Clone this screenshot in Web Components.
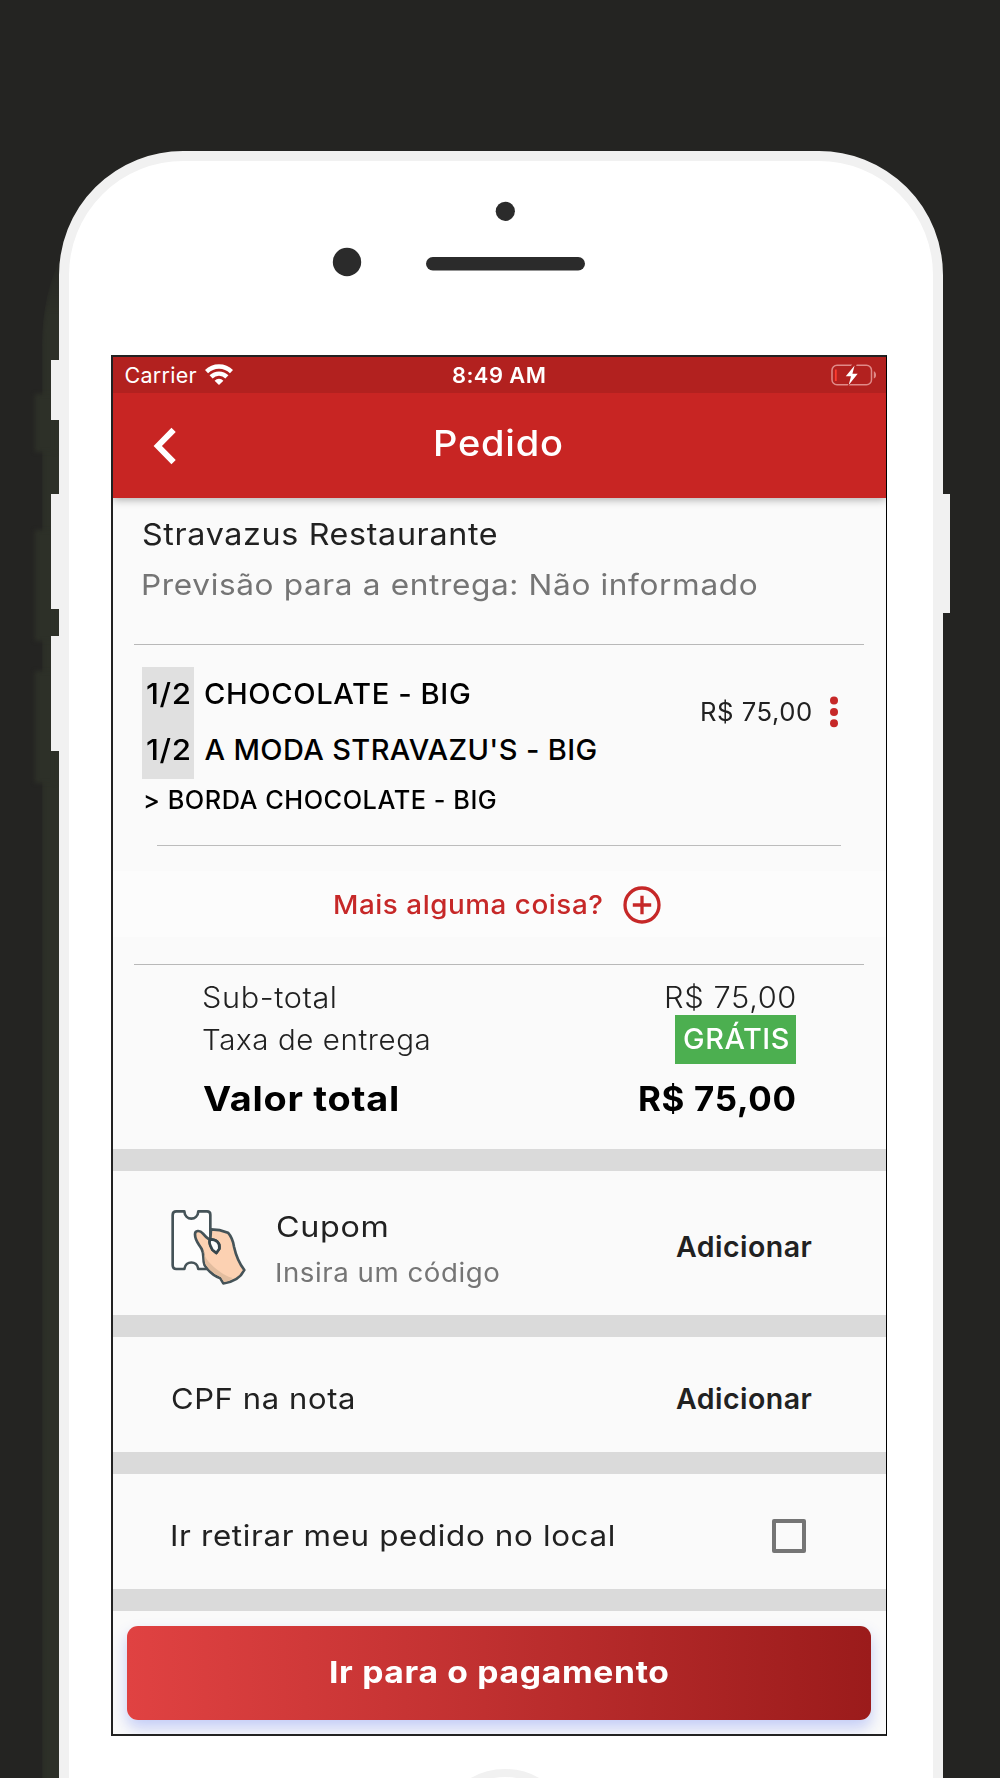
<!DOCTYPE html>
<html lang="pt-BR">
<head>
<meta charset="utf-8">
<title>Pedido</title>
<style>
  body {
    margin: 0;
    height: 1778px;
    overflow: hidden;
    background: #242422;
    font-family: Inter, "Open Sans", sans-serif;
    color: #212121;
  }
</style>
</head>
<body>
<phone-frame>
  <status-bar></status-bar>
  <app-header><fit-text size="36" weight="500" width="127">Pedido</fit-text></app-header>
  <restaurant-info>
    <fit-text size="30" width="354">Stravazus Restaurante</fit-text>
    <fit-text slot="eta" size="29" width="613">Previsão para a entrega: Não informado</fit-text>
  </restaurant-info>
  <order-item></order-item>
  <add-more></add-more>
  <order-totals></order-totals>
  <option-row style="--height: 144px; --shift: 13px">
    <coupon-icon slot="icon"></coupon-icon>
    <fit-text size="29" width="110" line="46">Cupom</fit-text>
    <fit-text size="26" width="222" line="46" style="color: #757575">Insira um código</fit-text>
    <fit-text slot="action" size="28.5" weight="600" width="135.5" style="margin-top: -6px">Adicionar</fit-text>
  </option-row>
  <option-row style="--height: 115px; --shift: 8px">
    <fit-text size="29" width="182">CPF na nota</fit-text>
    <fit-text slot="action" size="28.5" weight="600" width="135.5">Adicionar</fit-text>
  </option-row>
  <option-row style="--height: 115px; --shift: 8px">
    <fit-text size="29" width="441">Ir retirar meu pedido no local</fit-text>
    <check-box slot="action"></check-box>
  </option-row>
  <pay-button><fit-text size="30.5" weight="700" width="337">Ir para o pagamento</fit-text></pay-button>
</phone-frame>

<script>
function define(name, html) {
  const template = document.createElement("template");
  template.innerHTML = html;

  customElements.define(name, class extends HTMLElement {
    constructor() {
      super();
      this.attachShadow({ mode: "open" }).appendChild(template.content.cloneNode(true));
    }
  });
}

// One line of text whose ink fills the given width: tracked a little first,
// then the glyphs are widened for what remains
class FitText extends HTMLElement {
  constructor() {
    super();
    this.attachShadow({ mode: "open" });
    this.shadowRoot.innerHTML = `
      <style>
        :host { display: block; flex: none; white-space: pre; text-align: left; }
        span { display: inline-block; transform-origin: 0 0; }
      </style>
      <span><slot></slot></span>
    `.replace(/>\s+</g, "><").trim();
  }

  connectedCallback() {
    const size = Number(this.getAttribute("size"));
    const weight = this.getAttribute("weight") || "400";
    const width = Number(this.getAttribute("width"));
    const line = this.getAttribute("line") || "44";
    const text = this.textContent;
    const span = this.shadowRoot.querySelector("span");

    this.style.width = `${width}px`;
    this.style.font = `${weight} ${size}px/${line}px Inter, "Open Sans", sans-serif`;

    const ctx = document.createElement("canvas").getContext("2d");
    ctx.font = `${weight} ${size}px Inter, "Open Sans", sans-serif`;
    const m = ctx.measureText(text);
    const left = -m.actualBoundingBoxLeft;
    const right = m.width - m.actualBoundingBoxRight;
    const ink = span.getBoundingClientRect().width - left - right;

    const gaps = text.length - 1;
    const spacing = Math.min((width - ink) / gaps, size * 0.02);
    const scale = width / (ink + spacing * gaps);

    span.style.letterSpacing = `${spacing}px`;
    span.style.transform = `scaleX(${scale})`;
    span.style.marginLeft = `${-left * scale + 0.5}px`;
  }
}

define("phone-frame", `
  <style>
    :host { display: block; position: relative; width: 1000px; height: 1778px; overflow: hidden; }
    .shade, .key, .home { position: absolute; }
    .shade { background: #2d3028; filter: blur(2px); }
    .shade.tall {
      left: 42px; top: 225px; width: 60px; height: 1650px;
      border-radius: 60px 0 0 0 / 120px 0 0 0;
      -webkit-mask-image: linear-gradient(transparent 10px, #000 90px);
      mask-image: linear-gradient(transparent 10px, #000 90px);
    }
    .shade.bump { left: 35px; width: 20px; }
    .key { background: #f1f1f1; width: 9px; }
    .left { left: 51px; }
    .right { left: 942px; width: 8px; }
    .body {
      position: relative;
      box-sizing: border-box;
      width: 884px;
      height: 1750px;
      margin: 151px 0 0 59px;
      border: 10px solid #f1f1f1;
      border-radius: 124px;
      background: #fff;
    }
    .top { height: 194px; }
    .top svg { display: block; }
    .screen {
      box-sizing: border-box;
      width: 776px;
      height: 1381px;
      margin-left: 42px;
      border: 2px solid #222;
      border-right: 1px solid #000;
      background: #fafafa;
      overflow: hidden;
    }
    .home {
      box-sizing: border-box;
      left: 437px; top: 1769px; width: 136px; height: 136px;
      border: 8px solid #f1f1f1; border-radius: 50%;
    }
  </style>
  <div class="shade tall"></div>
  <div class="shade bump" style="top: 394px; height: 58px"></div>
  <div class="shade bump" style="top: 530px; height: 111px"></div>
  <div class="shade bump" style="top: 671px; height: 112px"></div>
  <div class="key left" style="top: 360px; height: 60px"></div>
  <div class="key left" style="top: 494px; height: 115px"></div>
  <div class="key left" style="top: 636px; height: 115px"></div>
  <div class="key right" style="top: 494px; height: 119px"></div>
  <div class="body">
    <div class="top">
      <svg width="864" height="194" viewBox="69 161 864 194" fill="#2b2b2b">
        <circle cx="505.3" cy="211.3" r="9.6"/>
        <circle cx="347" cy="262" r="14.2"/>
        <rect x="426" y="257" width="159" height="13.6" rx="6.8"/>
      </svg>
    </div>
    <div class="screen"><slot></slot></div>
  </div>
  <div class="home"></div>
`);

define("status-bar", `
  <style>
    :host {
      display: grid;
      grid-template-columns: 1fr auto 1fr;
      align-items: center;
      position: relative;
      z-index: 1;
      height: 36px;
      padding: 0 13px 0 12px;
      background: #b2211f;
      color: #fff;
    }
    .carrier { display: flex; align-items: center; gap: 9px; }
    .battery { justify-self: end; margin: -1px -4px 0 0; }
    svg { display: block; }
  </style>
  <div class="carrier">
    <fit-text size="21.5" width="71" line="37">Carrier</fit-text>
    <svg width="28" height="21" viewBox="0 0 28 21" style="margin-top: -2px">
      <g fill="none" stroke="#fff" stroke-width="4.4">
        <path d="M1.5 7.6a17.7 17.7 0 0 1 25 0"/>
        <path d="M6.1 12.9a11.2 11.2 0 0 1 15.8 0"/>
      </g>
      <path d="M9.6 16.7a6.2 6.2 0 0 1 8.8 0L14 21z" fill="#fff"/>
    </svg>
  </div>
  <fit-text size="21.5" weight="600" width="92" line="37">8:49 AM</fit-text>
  <svg class="battery" width="46" height="22" viewBox="0 0 46 22">
    <rect x="1" y="1.2" width="39.5" height="19.6" rx="5" fill="none" stroke="#e08a88" stroke-width="1.5"/>
    <path d="M42.8 7.2v7.4c3-1 3-6.4 0-7.4z" fill="#e08a88"/>
    <path d="M4.8 5.5v11.5" stroke="#ff3b30" stroke-width="1.8"/>
    <path d="M22 -1 13 12.5h6L16.5 23 29 9.5h-6L26 -1z" fill="#b2211f"/>
    <path d="M23.6 1.6 14.8 12.2h5.2l-2.3 8.8 9-11.2h-5.3z" fill="#fff"/>
  </svg>
`);

define("app-header", `
  <style>
    :host {
      display: grid;
      grid-template-columns: 1fr auto 1fr;
      box-sizing: border-box;
      height: 105px;
      padding: 0 2px 6px 0;
      align-items: center;
      position: relative;
      background: #c82523;
      color: #fff;
      box-shadow: 0 2px 8px rgba(0, 0, 0, .3);
    }
    svg { margin: 6px 0 0 40px; }
  </style>
  <svg width="24" height="38" viewBox="0 0 24 38">
    <path d="M20.6 2.8 4.8 19l15.8 16.2" fill="none" stroke="#fff" stroke-width="6"/>
  </svg>
  <slot></slot>
`);

define("restaurant-info", `
  <style>
    :host { display: block; box-sizing: border-box; height: 146px; padding: 14px 30px 0; }
    .eta { margin-top: 7px; color: #757575; }
    hr { width: 730px; height: 1px; margin: 37px -9px 0; border: 0; background: #b8b8b8; }
  </style>
  <slot></slot>
  <div class="eta"><slot name="eta"></slot></div>
  <hr>
`);

define("order-item", `
  <style>
    :host { display: block; height: 202px; color: #000; }
    .row { display: flex; justify-content: space-between; box-sizing: border-box; height: 201px; padding: 23px 48px 0 29px; }
    .halves { display: grid; grid-template-columns: 52px auto; column-gap: 10px; }
    .halves fit-text { padding-bottom: 2px; }
    .chip { padding-left: 5px; background: #e0e0e0; }
    .extra { padding-left: 3px; }
    .price { display: flex; align-items: center; gap: 20px; height: 90px; color: #212121; }
    hr { width: 684px; height: 1px; margin: 0 0 0 44px; border: 0; background: #bcbcbc; }
  </style>
  <div class="row">
    <div>
      <div class="halves">
        <div class="chip"><fit-text size="29" weight="450" width="42" line="54">1/2</fit-text></div>
        <fit-text size="29" weight="450" width="264" line="54">CHOCOLATE - BIG</fit-text>
        <div class="chip"><fit-text size="29" weight="450" width="42" line="54">1/2</fit-text></div>
        <fit-text size="29" weight="450" width="391" line="54">A MODA STRAVAZU'S - BIG</fit-text>
      </div>
      <div class="extra"><fit-text size="25" weight="450" width="351" line="42">&gt; BORDA CHOCOLATE - BIG</fit-text></div>
    </div>
    <div class="price">
      <fit-text size="25.5" width="109">R$ 75,00</fit-text>
      <svg width="8" height="32" viewBox="0 0 8 32" fill="#c62828">
        <circle cx="4" cy="4.6" r="4"/><circle cx="4" cy="16" r="4"/><circle cx="4" cy="27.3" r="4"/>
      </svg>
    </div>
  </div>
  <hr>
`);

define("add-more", `
  <style>
    :host { display: block; padding-top: 25px; height: 94px; color: #c62828; }
    .button { display: flex; align-items: center; gap: 21px; box-sizing: border-box; height: 66px; padding: 2px 0 0 222px; background: #fcfcfc; }
    hr { width: 730px; height: 1px; margin: 27px 0 0 21px; border: 0; background: #b8b8b8; }
  </style>
  <div class="button">
    <fit-text size="26" weight="450" width="267">Mais alguma coisa?</fit-text>
    <svg width="38" height="38" viewBox="0 0 38 38" fill="none" stroke="currentColor" stroke-width="3.3">
      <circle cx="19" cy="19" r="17"/>
      <path d="M19 9.8v18.4M9.8 19h18.4"/>
    </svg>
  </div>
  <hr>
`);

define("order-totals", `
  <style>
    :host { display: block; box-sizing: border-box; height: 184px; padding: 14px 90px 0 90px; }
    .line { display: flex; justify-content: space-between; align-items: center; }
    .sub { height: 35px; margin-bottom: 1px; padding-right: 1px; }
    .fee { height: 49px; }
    .free { display: flex; align-items: center; box-sizing: border-box; height: 49px; padding: 0 9px 2px 8px; background: #4caf50; color: #fff; }
    .total { margin: 13px 0 0 -1px; padding-right: 1px; color: #000; }
  </style>
  <div class="line sub">
    <fit-text size="29.5" weight="300" width="132">Sub-total</fit-text>
    <fit-text size="29.5" weight="300" width="129">R$ 75,00</fit-text>
  </div>
  <div class="line fee">
    <fit-text size="28.5" weight="300" width="226" line="45">Taxa de entrega</fit-text>
    <div class="free"><fit-text size="28.5" weight="500" width="104">GRÁTIS</fit-text></div>
  </div>
  <div class="line total">
    <fit-text size="34" weight="700" width="195">Valor total</fit-text>
    <fit-text size="34" weight="700" width="155">R$ 75,00</fit-text>
  </div>
`);

// Settings row with the grey separator bar above it
define("option-row", `
  <style>
    :host {
      display: flex;
      justify-content: space-between;
      align-items: center;
      box-sizing: border-box;
      height: calc(var(--height) + 22px);
      padding: var(--shift, 6px) 75px 0 59px;
      border-top: 22px solid #dadada;
    }
    .main { display: flex; align-items: center; gap: 29px; }
    ::slotted(coupon-icon) { margin: -4px 0 0 -1px; }
  </style>
  <div class="main">
    <slot name="icon"></slot>
    <div><slot></slot></div>
  </div>
  <slot name="action"></slot>
`);

define("coupon-icon", `
  <style>
    :host { display: block; width: 77px; height: 77px; }
    svg { display: block; }
  </style>
  <svg width="76" height="77" viewBox="36 43 228 231" stroke="#455358" stroke-width="8" stroke-linejoin="round" stroke-linecap="round">
    <path fill="#fdfdfd" d="M52 50H76C78 79 116 79 118 50H144Q154 50 154 60V223H118C114 197 80 197 76 223H52Q41 223 41 211V61Q41 50 52 50z"/>
    <path fill="#fcd1b2" d="M156 104 C175 104 192 108 207 114 Q221 130 225 156 Q234 197 256 226 Q240 260 193 266 L184 251 Q155 240 137 212 C129 195 138 181 128 163 C119 147 108 139 108 119 C108 107 122 105 132 117 Q142 130 153 136 C148 145 155 155 160 165 L172 175 L181 162 C184 144 171 134 154 134z"/>
    <path fill="#e2bd9f" stroke="none" d="M132 165C137 195 160 215 194 239Q209 248 221 250Q210 261 195 262L186 248Q158 236 141 212C133 195 140 180 132 165z"/>
    <path fill="#fdfdfd" stroke="#37464c" d="M153 136C148 145 155 155 160 165L172 175L181 162C184 144 171 134 154 134"/>
  </svg>
`);

define("check-box", `
  <style>
    :host {
      box-sizing: border-box;
      width: 34px;
      height: 34px;
      margin: 1px 5px 0 0;
      border: 4px solid #757575;
      border-radius: 2px;
      display: block;
    }
  </style>
`);

define("pay-button", `
  <style>
    :host { display: block; padding: 15px 14px; height: 94px; border-top: 22px solid #dadada; }
    button {
      display: flex;
      justify-content: center;
      align-items: center;
      width: 744px;
      height: 94px;
      padding: 0 0 2px;
      border: 0;
      border-radius: 11px;
      background: linear-gradient(90deg, #e04242, #c03030 48%, #9b1b1b);
      box-shadow: 0 8px 15px rgba(80, 110, 240, .32);
      color: #fff;
    }
  </style>
  <button><slot></slot></button>
`);

customElements.define("fit-text", FitText);
</script>
</body>
</html>
